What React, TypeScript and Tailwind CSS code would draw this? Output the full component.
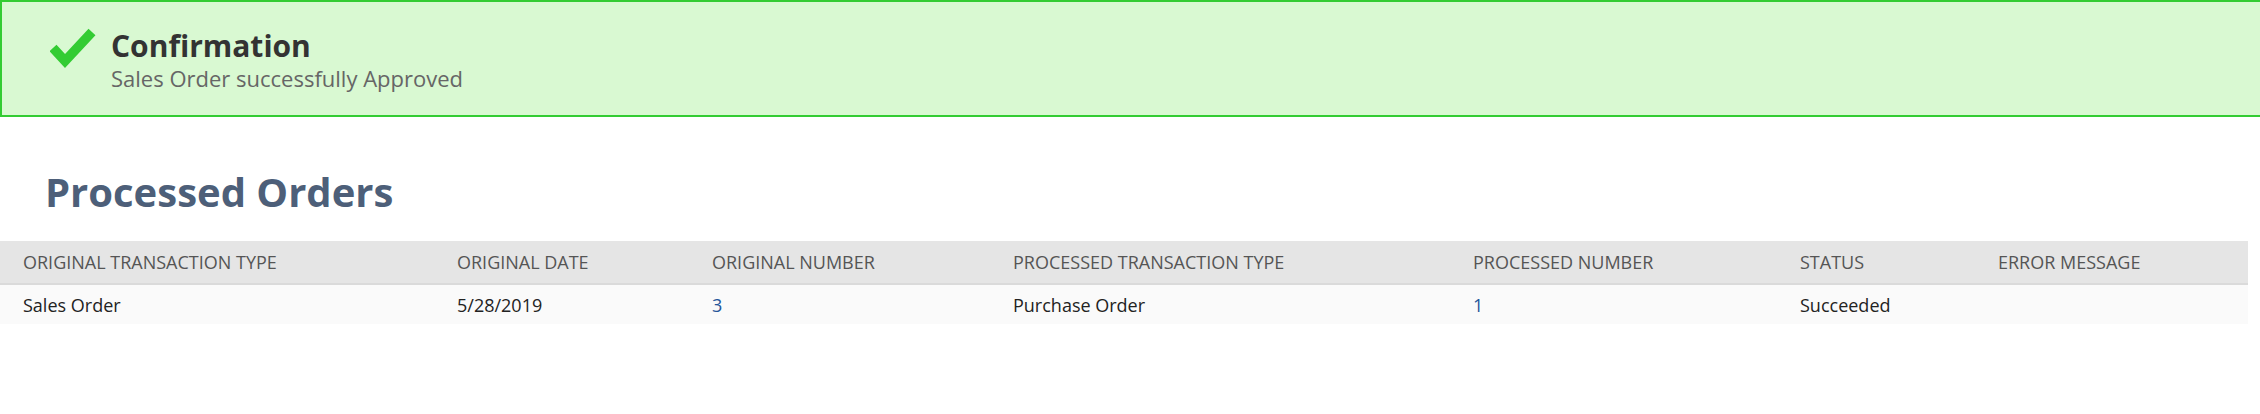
import React from "react";

const COLUMNS = [
  "Original Transaction Type",
  "Original Date",
  "Original Number",
  "Processed Transaction Type",
  "Processed Number",
  "Status",
  "Error Message",
];

type Row = {
  originalType: string;
  originalDate: string;
  originalNumber: string;
  processedType: string;
  processedNumber: string;
  status: string;
  error: string;
};

const ROWS: Row[] = [
  {
    originalType: "Sales Order",
    originalDate: "5/28/2019",
    originalNumber: "3",
    processedType: "Purchase Order",
    processedNumber: "1",
    status: "Succeeded",
    error: "",
  },
];

const GRID = "grid grid-cols-[434px_255px_301px_460px_327px_198px_1fr]";

function CheckIcon() {
  return (
    <svg width="46" height="40" viewBox="0 0 46 40" className="shrink-0">
      <polyline
        points="3,20 15,33 42,4"
        fill="none"
        stroke="#33cc33"
        strokeWidth="9.5"
        strokeLinecap="butt"
        strokeLinejoin="miter"
      />
    </svg>
  );
}

export default function App() {
  return (
    <div className="w-[2260px] h-[414px] bg-white overflow-hidden font-['Open_Sans',sans-serif]">
      {/* confirmation banner */}
      <div className="h-[117px] border-2 border-r-0 border-[#33cc33] bg-[#d9f9d2] flex items-start pl-[48px] pt-[24px]">
        <div className="mt-[2px]">
          <CheckIcon />
        </div>
        <div className="ml-[15px]">
          <div className="text-[30px] leading-[40px] font-bold text-[#333333]">Confirmation</div>
          <div className="text-[22px] leading-[28px] -mt-[2px] text-[#666666]">Sales Order successfully Approved</div>
        </div>
      </div>

      <h1 className="ml-[45px] mt-[49px] text-[40px] leading-[52px] font-bold text-[#4d5f79]">
        Processed Orders
      </h1>

      <div className="mt-[23px] w-[2248px]">
        <div className={`${GRID} h-[44px] pt-[1px] items-center bg-[#e5e5e5] border-b-2 border-[#dadada] text-[18px] uppercase text-[#555555]`}>
          {COLUMNS.map((c) => (
            <div key={c} className="pl-[23px] whitespace-nowrap">
              {c}
            </div>
          ))}
        </div>
        {ROWS.map((r, i) => (
          <div key={i} className={`${GRID} h-[39px] pt-[1px] items-center bg-[#fafafa] text-[18px] text-[#222222]`}>
            <div className="pl-[23px]">{r.originalType}</div>
            <div className="pl-[23px]">{r.originalDate}</div>
            <div className="pl-[23px]"><a className="text-[#255599]">{r.originalNumber}</a></div>
            <div className="pl-[23px]">{r.processedType}</div>
            <div className="pl-[23px]"><a className="text-[#255599]">{r.processedNumber}</a></div>
            <div className="pl-[23px]">{r.status}</div>
            <div className="pl-[23px]">{r.error}</div>
          </div>
        ))}
      </div>
    </div>
  );
}
